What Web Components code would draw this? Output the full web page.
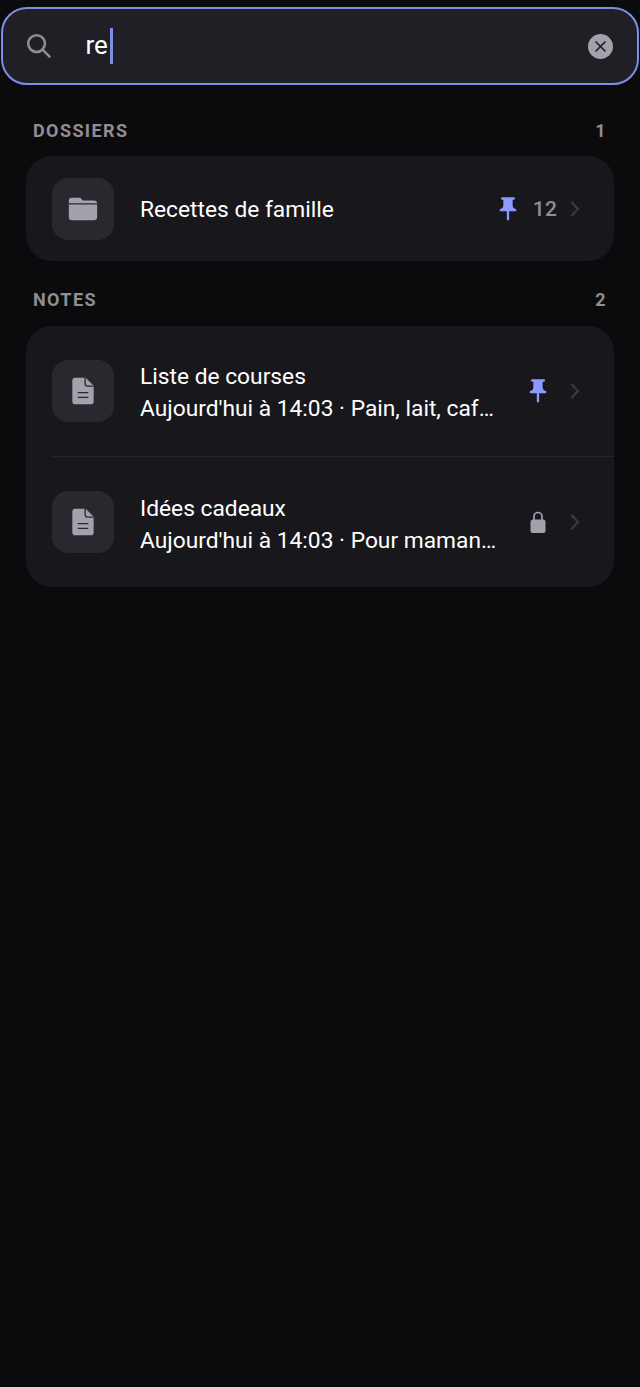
<!DOCTYPE html>
<html lang="fr">
<head>
<meta charset="utf-8">
<title>Recherche</title>
<style>
  html, body { margin: 0; background: #0b0b0d; }
  body { font-family: Roboto, "Liberation Sans", sans-serif; min-height: 1387px; overflow: hidden; }
</style>
</head>
<body>
<search-screen>
  <search-bar value="re"></search-bar>
  <result-section label="DOSSIERS" count="1">
    <result-row icon="folder" title="Recettes de famille" badge="pin" count="12"></result-row>
  </result-section>
  <result-section label="NOTES" count="2" class="notes">
    <result-row icon="note" title="Liste de courses" sub="Aujourd'hui à 14:03 · Pain, lait, caf…" badge="pin"></result-row>
    <result-row icon="note" title="Idées cadeaux" sub="Aujourd'hui à 14:03 · Pour maman…" badge="lock" divider></result-row>
  </result-section>
</search-screen>
<script>
const ICONS = {
  folder: `<svg width="34" height="34" viewBox="0 0 24 24"><path fill="#a2a2ac" d="M10 4H4c-1.1 0-2 .9-2 2v12c0 1.1.9 2 2 2h16c1.1 0 2-.9 2-2V8c0-1.1-.9-2-2-2h-8l-2-2z"/><path stroke="#28282e" stroke-width=".8" d="M2 8.4h20"/></svg>`,
  note: `<svg width="32" height="32" viewBox="0 0 24 24"><path fill="#a2a2ac" d="M14 2H6c-1.1 0-2 .9-2 2v16c0 1.1.9 2 2 2h12c1.1 0 2-.9 2-2V8l-6-6z"/><path fill="none" stroke="#28282e" stroke-width="1" d="M13.6 2v4.4c0 1.1.9 2 2 2H20M8 13.2h8M8 16.800h8"/></svg>`,
  pin: `<svg width="28" height="28" viewBox="0 0 24 24"><path fill="#8a9aff" d="M16 9V4h1c.55 0 1-.45 1-1s-.45-1-1-1H7c-.55 0-1 .45-1 1s.45 1 1 1h1v5c0 1.66-1.34 3-3 3v2h5.97v7l1 1 1-1v-7H19v-2c-1.66 0-3-1.34-3-3z"/></svg>`,
  lock: `<svg width="28" height="28" viewBox="0 0 28 28"><rect x="6.500" y="11.500" width="15" height="13.500" rx="2.500" fill="#a2a2ac"/><path fill="none" stroke="#a2a2ac" stroke-width="1.700" d="M10 12V8.500a4 4 0 0 1 8 0V12"/></svg>`,
  chevron: `<svg width="12" height="20" viewBox="0 0 12 20"><path fill="none" stroke="#3a3a40" stroke-width="2.200" stroke-linecap="round" stroke-linejoin="round" d="M3 3.500 9 10l-6 6.500"/></svg>`
};

class SearchScreen extends HTMLElement {
  constructor() {
    super();
    this.attachShadow({ mode: 'open' }).innerHTML = `
      <style>
        :host { display: flex; flex-direction: column; padding: 7px 1px 0; }
      </style>
      <slot></slot>`;
  }
}

class SearchBar extends HTMLElement {
  constructor() {
    super();
    this.attachShadow({ mode: 'open' }).innerHTML = `
      <style>
        :host {
          display: flex;
          align-items: center;
          box-sizing: border-box;
          height: 78px;
          padding: 0 24px 0 23px;
          background: #1f1f25;
          border: 2.500px solid #7c8fe6;
          border-radius: 26px;
          color: #fff;
        }
        .lens { display: block; flex: none; margin: 0 34.500px 2px 0; }
        .value { font-size: 26px; line-height: 36px; white-space: nowrap; margin-bottom: 2px; }
        .caret { flex: none; width: 3px; height: 36px; margin-left: 2px; background: #7c8fe6; }
        .spacer { flex: 1; }
        .clear {
          display: flex;
          align-items: center;
          justify-content: center;
          width: 25px;
          height: 25px;
          border-radius: 50%;
          background: #a2a2ac;
        }
      </style>
      <svg class="lens" width="25" height="25" viewBox="0 0 26 26" fill="none" stroke="#8e8e96" stroke-width="2.600" stroke-linecap="round"><circle cx="11" cy="11" r="8.700"/><path d="m17.500 17.500 7 7"/></svg>
      <span class="value"></span><span class="caret"></span>
      <span class="spacer"></span>
      <span class="clear"><svg width="13" height="13" viewBox="0 0 13 13" fill="none" stroke="#1f1f25" stroke-width="1.700" stroke-linecap="round"><path d="m2 2 9 9M11 2l-9 9"/></svg></span>`;
    this.shadowRoot.querySelector('.value').textContent = this.getAttribute('value');
  }
}

class ResultSection extends HTMLElement {
  constructor() {
    super();
    this.attachShadow({ mode: 'open' }).innerHTML = `
      <style>
        :host { display: block; margin: 0 25px; padding-top: 33px; }
        :host(.notes) { padding-top: 26px; }
        header {
          display: flex;
          justify-content: space-between;
          padding: 0 7px;
          height: 24px;
          margin-bottom: 14px;
          font-size: 18px;
          font-weight: 700;
          line-height: 26px;
          letter-spacing: 1.400px;
          color: #8e8e94;
        }
        :host(.notes) header { margin-bottom: 15px; }
        .card { background: #18181c; border-radius: 26px; overflow: hidden; }
      </style>
      <header><span class="label"></span><span class="count"></span></header>
      <div class="card"><slot></slot></div>`;
    this.shadowRoot.querySelector('.label').textContent = this.getAttribute('label');
    this.shadowRoot.querySelector('.count').textContent = this.getAttribute('count');
  }
}

class ResultRow extends HTMLElement {
  constructor() {
    super();
    const sub = this.getAttribute('sub');
    const count = this.getAttribute('count');
    const divider = this.hasAttribute('divider');
    this.attachShadow({ mode: 'open' }).innerHTML = `
      <style>
        :host { display: block; color: #fff; }
        .rule { height: 1px; margin-left: 26px; background: #26262b; }
        .row {
          display: flex;
          align-items: center;
          box-sizing: border-box;
          height: ${sub ? 130 : 105}px;
          padding: 0 33px 0 26px;
        }
        .tile {
          display: flex;
          align-items: center;
          justify-content: center;
          flex: none;
          width: 62px;
          height: 62px;
          border-radius: 16px;
          background: #28282e;
        }
        .tile svg, .badge svg, .chevron svg { display: block; }
        .text { flex: 1; min-width: 0; margin-left: 26px; padding-top: ${divider ? 6 : sub ? 4 : 3}px; }
        .title, .sub {
          font-size: 22.750px;
          line-height: 32px;
          white-space: nowrap;
        }
        .badge { flex: none; margin-left: 24px; }
        .num { flex: none; margin-left: 11px; font-size: 21px; font-weight: 500; color: #8e8e94; letter-spacing: .5px; }
        .num + .chevron { margin-left: 11.500px; }
        .chevron { flex: none; margin-left: 17px; }
      </style>
      ${divider ? '<div class="rule"></div>' : ''}
      <div class="row">
        <div class="tile">${ICONS[this.getAttribute('icon')]}</div>
        <div class="text">
          <div class="title"></div>
          ${sub ? '<div class="sub"></div>' : ''}
        </div>
        <div class="badge">${ICONS[this.getAttribute('badge')]}</div>
        ${count ? `<div class="num">${count}</div>` : ''}
        <div class="chevron">${ICONS.chevron}</div>
      </div>`;
    this.shadowRoot.querySelector('.title').textContent = this.getAttribute('title');
    if (sub) this.shadowRoot.querySelector('.sub').textContent = sub;
  }
}

customElements.define('search-screen', SearchScreen);
customElements.define('search-bar', SearchBar);
customElements.define('result-section', ResultSection);
customElements.define('result-row', ResultRow);
</script>
</body>
</html>
